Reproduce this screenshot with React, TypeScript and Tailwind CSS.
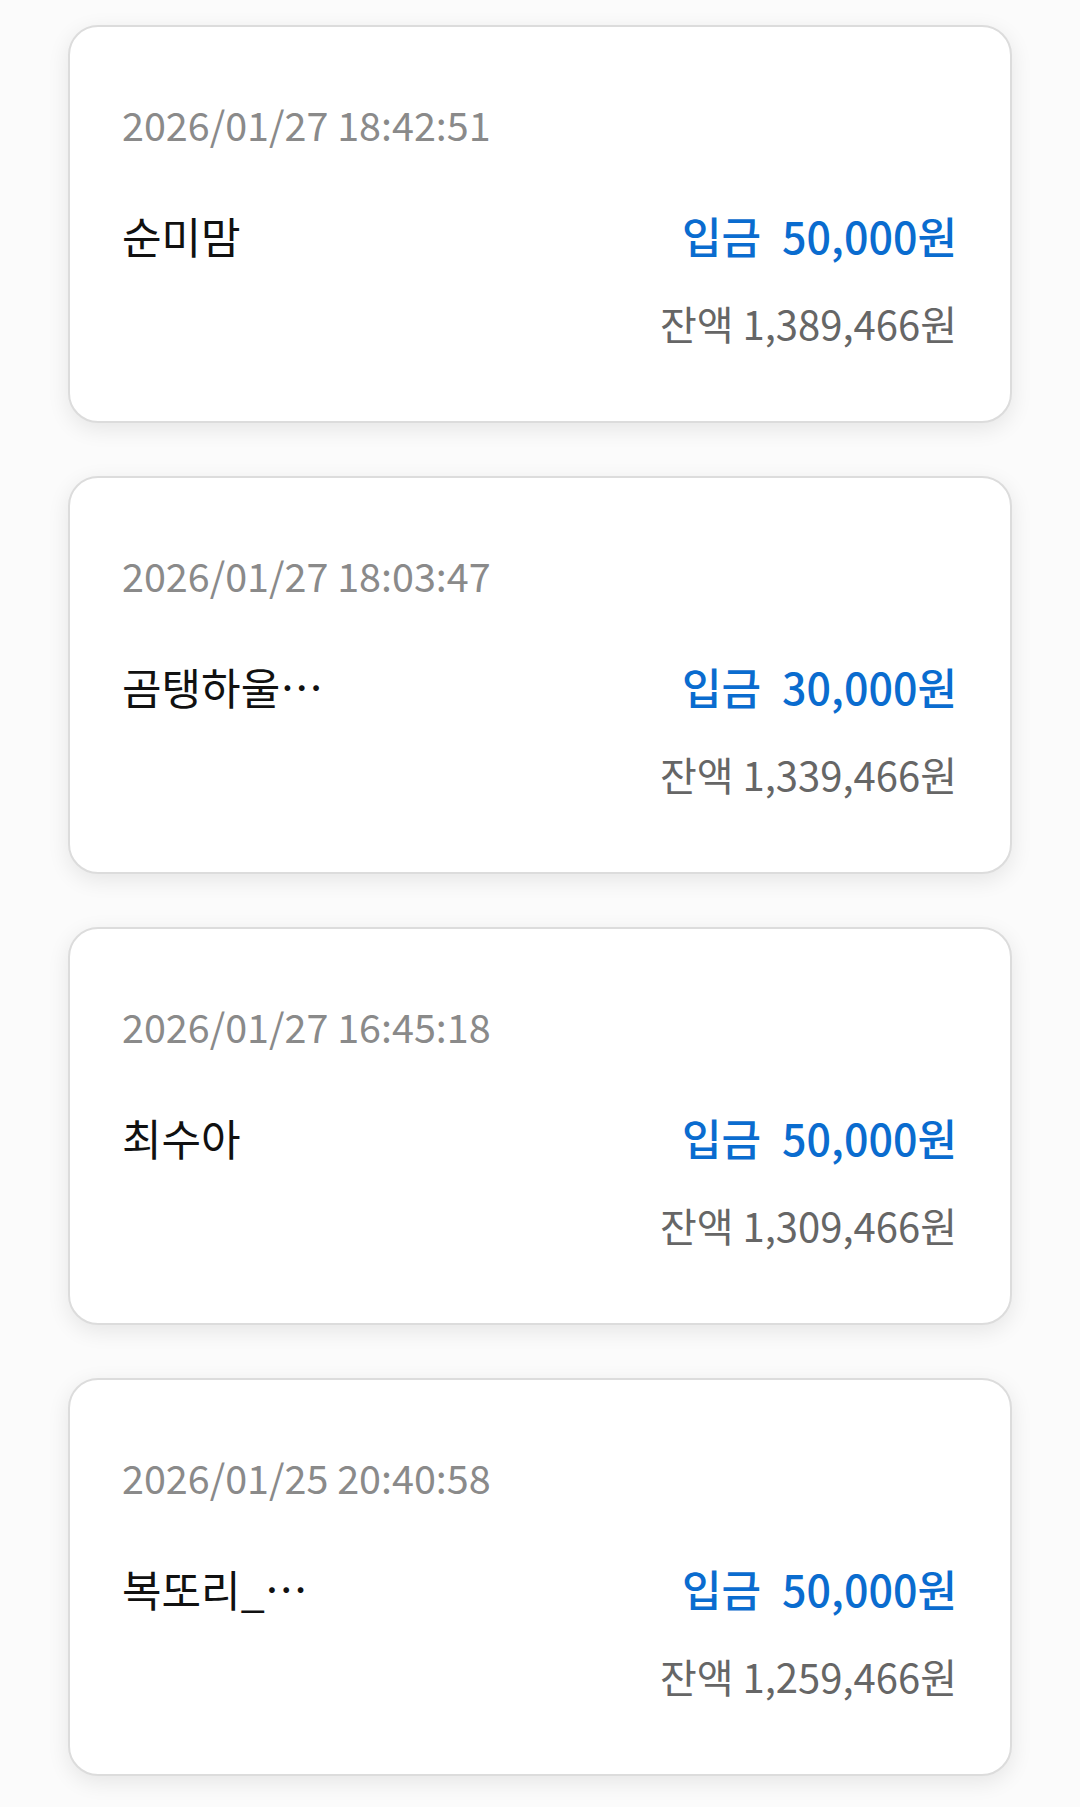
const rows = [
  { time: "2026/01/27 18:42:51", name: "순미맘", amount: "50,000원", balance: "1,389,466원" },
  { time: "2026/01/27 18:03:47", name: "곰탱하울…", amount: "30,000원", balance: "1,339,466원" },
  { time: "2026/01/27 16:45:18", name: "최수아", amount: "50,000원", balance: "1,309,466원" },
  { time: "2026/01/25 20:40:58", name: "복또리_…", amount: "50,000원", balance: "1,259,466원" },
];

const font = { fontFamily: '"Noto Sans CJK KR", "Noto Sans", sans-serif' };

export default function App() {
  return (
    <div className="min-h-[1807px] bg-[#fbfbfb] pt-[25px] px-[68px]" style={font}>
      <div className="flex flex-col gap-[53px]">
        {rows.map((r) => (
          <div
            key={r.time}
            className="h-[398px] bg-white border-2 border-[#dcdcdc] rounded-[30px] shadow-[0_6px_22px_rgba(0,0,0,0.09)] pl-[52px] pr-[53px] pt-[77px]"
          >
            <p className="text-[39.5px] leading-[40px] text-[#8a8a8a]">{r.time}</p>
            <div className="flex items-center justify-between mt-[70px]">
              <p className="text-[43px] leading-[43px] text-[#111111]">{r.name}</p>
              <p className="text-[43px] leading-[43px] font-medium text-[#0a6ccf] flex gap-[21px]">
                <span>입금</span>
                <span>{r.amount}</span>
              </p>
            </div>
            <p className="text-right text-[40px] leading-[40px] text-[#666666] mt-[46px]">
              잔액 {r.balance}
            </p>
          </div>
        ))}
      </div>
    </div>
  );
}
